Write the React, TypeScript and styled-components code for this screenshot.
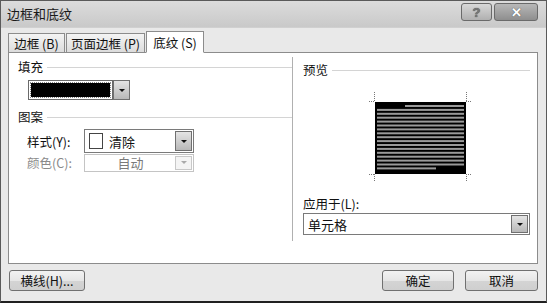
import React from 'react'
import styled, { createGlobalStyle } from 'styled-components'

const GlobalStyle = createGlobalStyle`
  html, body {
    margin: 0;
    padding: 0;
    background: #4a4a4a;
  }
  * { box-sizing: border-box; }
`

const FONT = `"Noto Sans CJK SC", "Noto Sans", "Liberation Sans", sans-serif`

const Window = styled.div`
  width: 547px;
  height: 303px;
  display: flex;
  flex-direction: column;
  background: #e9e9e9;
  border: 1px solid #5a5a5a;
  border-bottom: 2px solid #202020;
  font-family: ${FONT};
  font-size: 12px;
  color: #111;
  overflow: hidden;
`

const TitleBar = styled.div`
  height: 27px;
  display: flex;
  align-items: center;
  padding: 0 8px 0 6px;
  background: linear-gradient(#dcdcdc, #c9c9c9);
  border-bottom: 1px solid #d0d0d0;
`

const Title = styled.div`
  flex: 1;
  font-size: 13px;
  color: #1a1a1a;
  margin-top: -2px;
`

const CaptionButton = styled.div<{ $close?: boolean }>`
  width: ${(p) => (p.$close ? 44 : 31)}px;
  height: 18px;
  margin-top: -4px;
  margin-left: 2px;
  border: 1px solid #6a6a6a;
  border-radius: 3px;
  display: flex;
  align-items: center;
  justify-content: center;
  background: ${(p) => (p.$close ? 'linear-gradient(#b8b8b8, #8e8e8e)' : 'linear-gradient(#d8d8d8, #b0b0b0)')};
  color: ${(p) => (p.$close ? '#fff' : '#777')};
  font-family: "Liberation Sans", sans-serif;
  font-weight: bold;
  font-size: 13px;
  text-shadow: 0 0 1px #333;
`

const Body = styled.div`
  flex: 1;
  display: flex;
  flex-direction: column;
  padding: 2px 8px 0 7px;
`

const TabStrip = styled.div`
  display: flex;
  align-items: flex-end;
  height: 22px;
  position: relative;
  z-index: 1;
`

const Tab = styled.div<{ $active?: boolean; $w: number }>`
  width: ${(p) => p.$w}px;
  height: ${(p) => (p.$active ? 22 : 19)}px;
  margin-right: 1px;
  display: flex;
  align-items: center;
  justify-content: center;
  border: 1px solid #8c8c8c;
  border-bottom: ${(p) => (p.$active ? '1px solid #fff' : 'none')};
  background: ${(p) => (p.$active ? '#fff' : 'linear-gradient(#f4f4f4, #dcdcdc)')};
  font-size: 12.5px;
  margin-bottom: ${(p) => (p.$active ? -1 : 0)}px;
`

const Panel = styled.div`
  height: 212px;
  background: #fff;
  border: 1px solid #8c8c8c;
  display: flex;
`

const LeftCol = styled.div`
  width: 284px;
  padding: 0 0 0 9px;
  border-right: 1px solid #b0b0b0;
  margin: 4px 0 22px;
`

const RightCol = styled.div`
  flex: 1;
  padding: 7px 7px 0 10px;
`

const GroupHeader = styled.div`
  display: flex;
  align-items: center;
  gap: 4px;
  height: 18px;
  font-size: 12.5px;
  &::after {
    content: '';
    flex: 1;
    height: 1px;
    background: #d4d4d4;
    margin-top: 2px;
  }
`

const FillRow = styled.div`
  display: flex;
  margin: 5px 0 0 10px;
  height: 20px;
`

const Swatch = styled.div`
  width: 85px;
  height: 20px;
  border: 1px solid #6a6a6a;
  padding: 2px;
  &::before {
    content: '';
    display: block;
    width: 100%;
    height: 100%;
    background: #000;
    outline: 1px dotted #888;
  }
`

const ArrowButton = styled.div<{ $disabled?: boolean }>`
  width: 17px;
  height: 100%;
  border: 1px solid ${(p) => (p.$disabled ? '#c8c8c8' : '#707070')};
  background: ${(p) => (p.$disabled ? '#f4f4f4' : 'linear-gradient(#e4e4e4, #b8b8b8)')};
  display: flex;
  align-items: center;
  justify-content: center;
  &::after {
    content: '';
    border-left: 3px solid transparent;
    border-right: 3px solid transparent;
    border-top: 3px solid ${(p) => (p.$disabled ? '#aaa' : '#111')};
  }
`

const PatternGroup = styled.div`
  margin-top: 7px;
`

const FieldRow = styled.div<{ $first?: boolean }>`
  display: flex;
  align-items: center;
  margin: ${(p) => (p.$first ? 4 : 0)}px 0 0 9px;
`

const FieldLabel = styled.div<{ $disabled?: boolean }>`
  width: 57px;
  font-size: 12.5px;
  color: ${(p) => (p.$disabled ? '#8a8a8a' : '#111')};
`

const Select = styled.div<{ $disabled?: boolean; $h: number; $w?: number }>`
  width: ${(p) => (p.$w ? `${p.$w}px` : '100%')};
  height: ${(p) => p.$h}px;
  display: flex;
  align-items: center;
  border: 1px solid ${(p) => (p.$disabled ? '#c4c4c4' : '#7a7a7a')};
  background: #fff;
  padding: 1px;
  color: ${(p) => (p.$disabled ? '#7a7a7a' : '#111')};
`

const SelectValue = styled.div<{ $center?: boolean }>`
  flex: 1;
  display: flex;
  align-items: center;
  justify-content: ${(p) => (p.$center ? 'center' : 'flex-start')};
  padding-left: ${(p) => (p.$center ? 0 : 3)}px;
  gap: 6px;
  font-size: 13px;
`

const NoneBox = styled.div`
  width: 14px;
  height: 16px;
  border: 1px solid #444;
`

const PreviewArea = styled.div`
  display: flex;
  justify-content: center;
  margin: 10px 0 0 8px;
  height: 88px;
`

const ApplyLabel = styled.div`
  margin-top: 18px;
  font-size: 12.5px;
`

const Footer = styled.div`
  flex: 1;
  display: flex;
  align-items: center;
  padding: 0 0 4px 1px;
`

const Button = styled.div<{ $w: number; $gap?: number }>`
  width: ${(p) => p.$w}px;
  height: 21px;
  border: 1px solid #707070;
  border-radius: 3px;
  background: linear-gradient(#f2f2f2 0%, #e6e6e6 50%, #d4d4d4 51%, #cfcfcf 100%);
  display: flex;
  align-items: center;
  justify-content: center;
  font-size: 12.5px;
  margin-left: ${(p) => p.$gap ?? 0}px;
`

const Spacer = styled.div`
  flex: 1;
`

const Preview = () => {
  const left = 14
  const top = 14
  const w = 91
  const h = 72
  const lines = []
  for (let i = 0; i < 17; i++) {
    const y = top + 3 + i * 3.9
    let x1 = left + 2
    let x2 = left + w - 2
    if (i === 0) x1 = left + 30
    if (i === 16) x2 = left + 61
    lines.push(<rect key={i} x={x1} y={y} width={x2 - x1} height={2} fill="#9a9a9a" />)
  }
  const tick = '#777'
  return (
    <svg width={120} height={100} viewBox="0 0 120 100">
      <rect x={left} y={top} width={w} height={h} fill="#000" />
      {lines}
      <g stroke={tick} strokeWidth={1} strokeDasharray="1 1">
        <line x1={left - 6} y1={top - 0.5} x2={left} y2={top - 0.5} />
        <line x1={left + w} y1={top - 0.5} x2={left + w + 6} y2={top - 0.5} />
        <line x1={left - 6} y1={top + h + 0.5} x2={left} y2={top + h + 0.5} />
        <line x1={left + w} y1={top + h + 0.5} x2={left + w + 6} y2={top + h + 0.5} />
        <line x1={left - 0.5} y1={top - 10} x2={left - 0.5} y2={top} />
        <line x1={left + w + 0.5} y1={top - 10} x2={left + w + 0.5} y2={top} />
        <line x1={left - 0.5} y1={top + h} x2={left - 0.5} y2={top + h + 8} />
        <line x1={left + w + 0.5} y1={top + h} x2={left + w + 0.5} y2={top + h + 8} />
      </g>
    </svg>
  )
}

const App = () => {
  return (
    <>
      <GlobalStyle />
      <Window>
        <TitleBar>
          <Title>边框和底纹</Title>
          <CaptionButton>?</CaptionButton>
          <CaptionButton $close>✕</CaptionButton>
        </TitleBar>
        <Body>
          <TabStrip>
            <Tab $w={57}>边框 (B)</Tab>
            <Tab $w={79}>页面边框 (P)</Tab>
            <Tab $w={58} $active>底纹 (S)</Tab>
          </TabStrip>
          <Panel>
            <LeftCol>
              <GroupHeader>填充</GroupHeader>
              <FillRow>
                <Swatch />
                <ArrowButton />
              </FillRow>
              <PatternGroup>
                <GroupHeader>图案</GroupHeader>
                <FieldRow $first>
                  <FieldLabel>样式(Y):</FieldLabel>
                  <Select $h={24} $w={110}>
                    <SelectValue>
                      <NoneBox />
                      清除
                    </SelectValue>
                    <ArrowButton />
                  </Select>
                </FieldRow>
                <FieldRow>
                  <FieldLabel $disabled>颜色(C):</FieldLabel>
                  <Select $h={18} $w={110} $disabled>
                    <SelectValue $center>自动</SelectValue>
                    <ArrowButton $disabled />
                  </Select>
                </FieldRow>
              </PatternGroup>
            </LeftCol>
            <RightCol>
              <GroupHeader>预览</GroupHeader>
              <PreviewArea>
                <Preview />
              </PreviewArea>
              <ApplyLabel>应用于(L):</ApplyLabel>
              <Select $h={22}>
                <SelectValue>单元格</SelectValue>
                <ArrowButton />
              </Select>
            </RightCol>
          </Panel>
          <Footer>
            <Button $w={76}>横线(H)...</Button>
            <Spacer />
            <Button $w={72}>确定</Button>
            <Button $w={73} $gap={11}>取消</Button>
          </Footer>
        </Body>
      </Window>
    </>
  )
}

export default App
